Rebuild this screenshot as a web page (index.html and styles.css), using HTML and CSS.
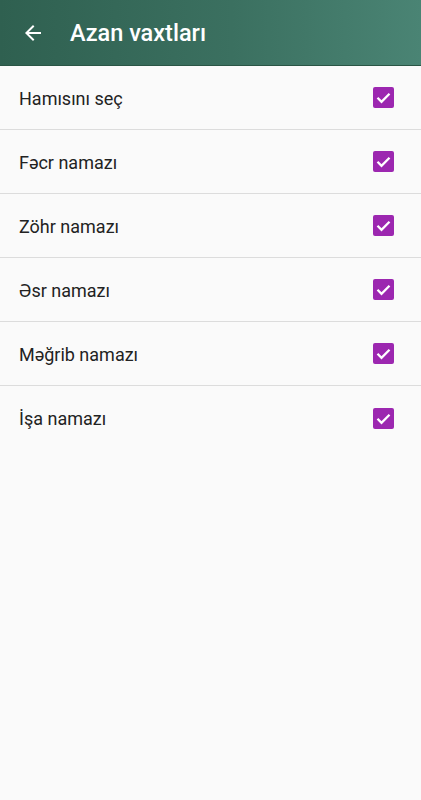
FILE: index.html
```html
<!DOCTYPE html>
<html lang="az">
<head>
<meta charset="utf-8">
<link rel="stylesheet" href="styles.css">
</head>
<body>
<header class="appbar">
  <svg class="back" width="24" height="24" viewBox="0 0 24 24"><path d="M20 11H7.83l5.59-5.59L12 4l-8 8 8 8 1.41-1.41L7.83 13H20v-2z" fill="#fff"/></svg>
  <h1 class="title">Azan vaxtları</h1>
</header>
<ul class="list">
  <li class="row"><span class="label">Hamısını seç</span><svg class="check" viewBox="0 0 21 21"><rect width="21" height="21" rx="2" fill="#9c27b0"/><path d="M4.5 10.8l4 4 8-8" fill="none" stroke="#fff" stroke-width="2.3"/></svg></li>
  <li class="row"><span class="label">Fəcr namazı</span><svg class="check" viewBox="0 0 21 21"><rect width="21" height="21" rx="2" fill="#9c27b0"/><path d="M4.5 10.8l4 4 8-8" fill="none" stroke="#fff" stroke-width="2.3"/></svg></li>
  <li class="row"><span class="label">Zöhr namazı</span><svg class="check" viewBox="0 0 21 21"><rect width="21" height="21" rx="2" fill="#9c27b0"/><path d="M4.5 10.8l4 4 8-8" fill="none" stroke="#fff" stroke-width="2.3"/></svg></li>
  <li class="row"><span class="label">Əsr namazı</span><svg class="check" viewBox="0 0 21 21"><rect width="21" height="21" rx="2" fill="#9c27b0"/><path d="M4.5 10.8l4 4 8-8" fill="none" stroke="#fff" stroke-width="2.3"/></svg></li>
  <li class="row"><span class="label">Məğrib namazı</span><svg class="check" viewBox="0 0 21 21"><rect width="21" height="21" rx="2" fill="#9c27b0"/><path d="M4.5 10.8l4 4 8-8" fill="none" stroke="#fff" stroke-width="2.3"/></svg></li>
  <li class="row last"><span class="label">İşa namazı</span><svg class="check" viewBox="0 0 21 21"><rect width="21" height="21" rx="2" fill="#9c27b0"/><path d="M4.5 10.8l4 4 8-8" fill="none" stroke="#fff" stroke-width="2.3"/></svg></li>
</ul>
</body>
</html>
```
FILE: styles.css
```css
html, body {
  margin: 0;
  padding: 0;
  background: #fafafa;
  font-family: Roboto, "Noto Sans", sans-serif;
}
.appbar {
  height: 66px;
  display: flex;
  align-items: center;
  background: linear-gradient(90deg, #2f6050 0%, #3b7060 55%, #4a8474 100%);
  border-bottom: 1px solid #2a5545;
  box-sizing: border-box;
  padding-left: 21px;
}
.back {
  width: 24px;
  height: 24px;
  display: block;
}
.title {
  margin: 0 0 0 25px;
  color: #fff;
  font-size: 23.5px;
  font-weight: 500;
  letter-spacing: 0;
}
.list {
  list-style: none;
  margin: 0;
  padding: 0;
}
.row {
  height: 64px;
  display: flex;
  align-items: center;
  justify-content: space-between;
  padding: 1px 27px 0 19px;
  border-bottom: 1px solid #dcdcdc;
  box-sizing: border-box;
}
.row.last {
  border-bottom: none;
}
.label {
  font-size: 18px;
  color: #222;
}
.check {
  width: 21px;
  height: 21px;
  display: block;
  margin-top: -1px;
}
```
